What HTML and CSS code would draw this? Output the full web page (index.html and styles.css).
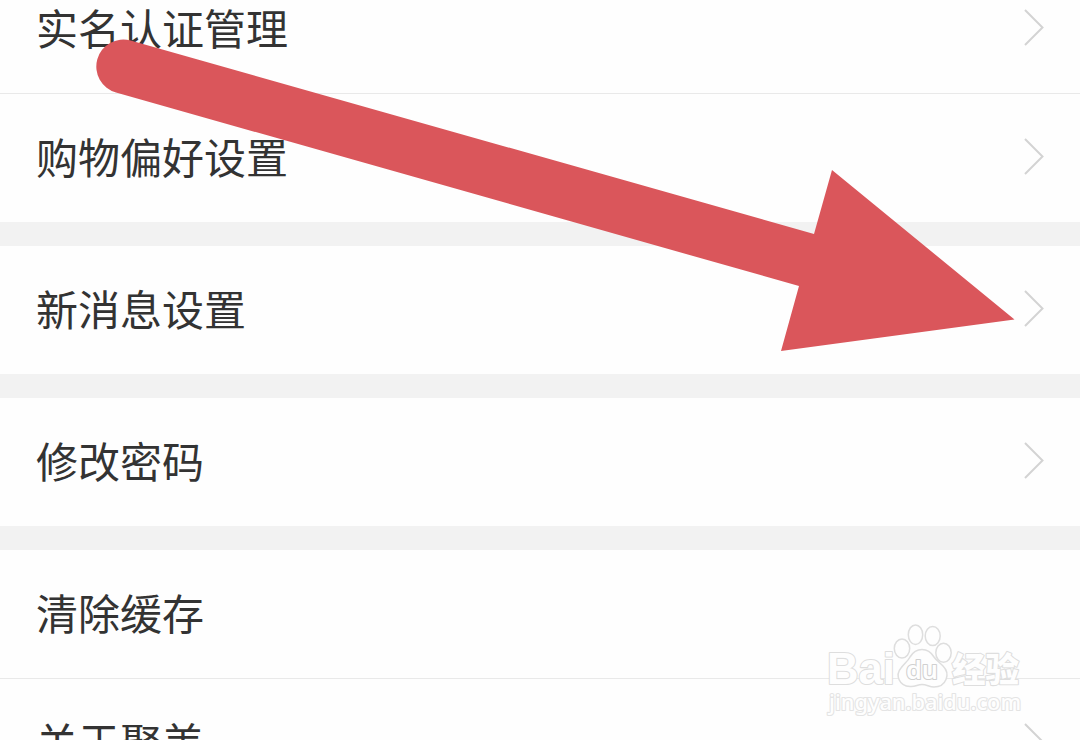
FILE: index.html
```html
<!DOCTYPE html>
<html lang="zh">
<head>
  <meta charset="UTF-8">
  <title>设置</title>
  <link rel="stylesheet" href="styles.css">
</head>
<body>
  <main class="settings">
    <section class="group">
      <div class="row">
        <span>实名认证管理</span>
        <svg class="chevron" viewBox="0 0 22 40"><path d="M3 3L20.5 20.5L3 38"/></svg>
      </div>
      <div class="row">
        <span>购物偏好设置</span>
        <svg class="chevron" viewBox="0 0 22 40"><path d="M3 3L20.5 20.5L3 38"/></svg>
      </div>
    </section>
    <section class="group">
      <div class="row">
        <span>新消息设置</span>
        <svg class="chevron" viewBox="0 0 22 40"><path d="M3 3L20.5 20.5L3 38"/></svg>
      </div>
    </section>
    <section class="group">
      <div class="row">
        <span>修改密码</span>
        <svg class="chevron" viewBox="0 0 22 40"><path d="M3 3L20.5 20.5L3 38"/></svg>
      </div>
    </section>
    <section class="group">
      <div class="row">
        <span>清除缓存</span>
      </div>
      <div class="row">
        <span>关于聚美</span>
        <svg class="chevron" viewBox="0 0 22 40"><path d="M3 3L20.5 20.5L3 38"/></svg>
      </div>
    </section>
  </main>

  <!-- 指示箭头 -->
  <svg class="arrow" viewBox="0 0 1080 740">
    <path d="M130.6 40.5L814 234L832 170L1014.5 319.5L781 351L799 286L116 92.5A26.9 26.9 0 0 1 130.6 40.5Z"/>
  </svg>

  <!-- 水印 -->
  <svg class="watermark" viewBox="0 0 210 100">
    <text class="brand" x="7" y="64" textLength="68" lengthAdjust="spacingAndGlyphs">Bai</text>
    <ellipse cx="82" cy="28.5" rx="7.7" ry="9.5"/>
    <ellipse cx="95.5" cy="14.7" rx="7.2" ry="9.8"/>
    <ellipse cx="112.7" cy="16" rx="7.5" ry="9.5"/>
    <ellipse cx="123.5" cy="32.7" rx="7.7" ry="9.5"/>
    <path d="M90 37C96 27 108 27 114 37C116 40 119 42 123 46C131 54 126 67 114 67C109 67 107 64.5 102 64.5C97 64.5 96 67 90 66.5C79 66 75 55 81 48C84 44 88 41 90 37Z"/>
    <text class="du" x="86" y="59" textLength="32" lengthAdjust="spacingAndGlyphs">du</text>
    <text class="jingyan" x="132" y="62" textLength="67" lengthAdjust="spacingAndGlyphs">经验</text>
    <text class="site" x="9" y="90" textLength="192" lengthAdjust="spacingAndGlyphs">jingyan.baidu.com</text>
  </svg>
</body>
</html>
```
FILE: styles.css
```css
body {
  margin: 0;
  height: 740px;
  overflow: hidden;
  position: relative;
  background: #f2f2f2;
  font-family: "Noto Sans CJK SC", sans-serif;
}

/* 列表已向上滚动一段 */
.settings {
  display: flex;
  flex-direction: column;
  gap: 24px;
  height: 775px;
  margin-top: -35px;
  overflow: hidden;
}

.group {
  flex-shrink: 0;
  background: #fefefe;
}

.row {
  display: flex;
  align-items: center;
  justify-content: space-between;
  height: 128px;
  padding: 0 36px;
  color: #333;
  font-size: 42px;
  line-height: 60px;
}

.row span {
  margin-bottom: 4px;
}

.row + .row {
  border-top: 1px solid #e9e9e9;
}

.chevron {
  width: 22px;
  height: 40px;
  margin-bottom: 4px;
  fill: none;
  stroke: #d3d3d3;
  stroke-width: 2;
}

.arrow {
  position: absolute;
  top: 0;
  left: 0;
  width: 1080px;
  height: 740px;
  fill: #da565b;
}

.watermark {
  position: absolute;
  right: 50px;
  bottom: 20px;
  width: 210px;
  height: 100px;
  fill: #fefefe;
  stroke: #dedede;
  stroke-width: 1.5;
}

.watermark text {
  paint-order: stroke;
  stroke-width: 2.2;
  stroke-linejoin: round;
}

.brand {
  font: bold 45px "Liberation Sans", sans-serif;
}

.watermark .du {
  font: 600 26px "Noto Sans", sans-serif;
  stroke: #d0d0d0;
}

.jingyan {
  font: 900 34px "Noto Sans CJK SC", sans-serif;
}

.watermark .site {
  font: 500 22px "Noto Sans", sans-serif;
  stroke: #e4e4e4;
}
```
